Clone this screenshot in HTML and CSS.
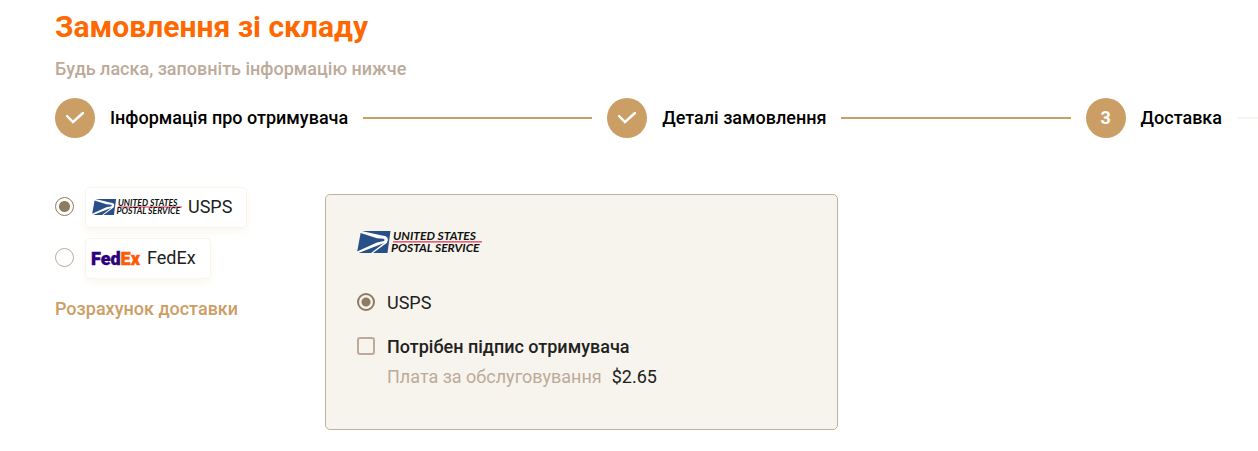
FILE: index.html
```html
<!DOCTYPE html>
<html lang="uk">
<head>
<meta charset="utf-8">
<meta name="viewport" content="width=device-width, initial-scale=1">
<title>Замовлення зі складу</title>
<link rel="stylesheet" href="styles.css">
</head>
<body>
<main class="page">
  <header class="heading">
    <h1 class="title">Замовлення зі складу</h1>
    <p class="subtitle">Будь ласка, заповніть інформацію нижче</p>
  </header>

  <ol class="steps">
    <li class="step">
      <span class="step-mark"><svg class="check" viewBox="0 0 20 20"><path d="M2 8 8 14 18 5"/></svg></span>
      <span class="step-name">Інформація про отримувача</span>
      <span class="step-line"></span>
    </li>
    <li class="step">
      <span class="step-mark"><svg class="check" viewBox="0 0 20 20"><path d="M2 8 8 14 18 5"/></svg></span>
      <span class="step-name">Деталі замовлення</span>
      <span class="step-line"></span>
    </li>
    <li class="step step-current" aria-current="step">
      <span class="step-mark">3</span>
      <span class="step-name">Доставка</span>
      <span class="step-line"></span>
    </li>
  </ol>

  <div class="content">
    <div class="carriers">
      <label class="carrier">
        <input class="radio radio-large" type="radio" name="carrier" checked>
        <span class="carrier-card">
          <svg class="usps-logo carrier-usps" viewBox="0 0 125 22" role="img" aria-label="United States Postal Service">
            <path fill="#fff" d="M4 0H33.500L30.500 22H0Z"/>
            <path fill="#285088" d="M4.600 0H33.500L30.500 22H16L30 11.800Q31.500 9.500 30.600 7 29 4.600 25 4.600Z"/>
            <path fill="#285088" d="M3.600 2 20 7.200 26.500 7.800Q28.500 8.800 27 10L20 11.500 .2 20.500Z"/>
            <path fill="#285088" d="M1.500 22 27 12 14 22Z"/>
            <path fill="#e0304e" d="M36.200 10.300H125L124.700 11.600H36Z"/>
            <text class="usps-text" x="36" y="9">UNITED STATES</text>
            <text class="usps-text" x="34" y="21">POSTAL SERVICE</text>
          </svg>
          USPS
        </span>
      </label>
      <label class="carrier">
        <input class="radio radio-large" type="radio" name="carrier">
        <span class="carrier-card">
          <svg class="carrier-fedex" viewBox="0 0 49 16" role="img" aria-label="FedEx"><text class="fedex-text" x="-1" y="15"><tspan class="fed">Fed</tspan><tspan class="ex">Ex</tspan></text></svg>
          FedEx
        </span>
      </label>
      <a class="calc" href="#">Розрахунок доставки</a>
    </div>

    <section class="panel">
      <svg class="usps-logo panel-logo" viewBox="0 0 125 22" role="img" aria-label="United States Postal Service">
        <path fill="#fff" d="M4 0H33.500L30.500 22H0Z"/>
        <path fill="#285088" d="M4.600 0H33.500L30.500 22H16L30 11.800Q31.500 9.500 30.600 7 29 4.600 25 4.600Z"/>
        <path fill="#285088" d="M3.600 2 20 7.200 26.500 7.800Q28.500 8.800 27 10L20 11.500 .2 20.500Z"/>
        <path fill="#285088" d="M1.500 22 27 12 14 22Z"/>
        <path fill="#e0304e" d="M36.200 10.300H125L124.700 11.600H36Z"/>
        <text class="usps-text" x="36" y="9">UNITED STATES</text>
        <text class="usps-text" x="34" y="21">POSTAL SERVICE</text>
      </svg>
      <label class="choice">
        <input class="radio radio-bold" type="radio" name="service" checked>
        <span>USPS</span>
      </label>
      <label class="choice choice-strong">
        <input class="checkbox" type="checkbox">
        <span>Потрібен підпис отримувача</span>
      </label>
      <p class="fee"><span class="fee-name">Плата за обслуговування</span><span>$2.65</span></p>
    </section>
  </div>
</main>
</body>
</html>
```

FILE: styles.css
```css
* { box-sizing: border-box; }

body {
  margin: 0;
  background: #fff;
  color: #212121;
  font: 400 18px/24px Roboto, "Noto Sans", sans-serif;
}

.page { padding: 8px 0 20px 55px; }

.title {
  margin: 0;
  color: #ff6700;
  font-size: 30px;
  line-height: 38px;
  font-weight: 700;
}

.subtitle {
  margin: 11px 0 17px;
  color: #bcab9b;
  font-weight: 500;
}

.steps {
  display: flex;
  gap: 15px;
  margin: 0;
  padding: 0;
  list-style: none;
  overflow: hidden;
}

.step {
  display: flex;
  flex: 1 0 auto;
  align-items: center;
  gap: 15px;
}

.step-current { flex-grow: 0; }

.step-mark {
  display: flex;
  align-items: center;
  justify-content: center;
  width: 40px;
  height: 40px;
  border-radius: 50%;
  background: #cb9e65;
  color: #fff;
  font-weight: 700;
}

.check {
  width: 20px;
  height: 20px;
  fill: none;
  stroke: #fff;
  stroke-width: 2.4;
  stroke-linecap: round;
}

.step-name {
  color: #000;
  font-weight: 500;
  white-space: nowrap;
}

.step-line {
  flex: 1 0 21px;
  height: 2px;
  background: #cb9e65;
}

.step-current .step-line { background: #f8f4ef; }

.content {
  display: grid;
  grid-template-columns: 270px minmax(0, 513px);
  align-items: start;
  padding: 49px 20px 0 0;
}

.carriers {
  display: flex;
  flex-direction: column;
  align-items: flex-start;
  gap: 10px;
}

.carrier {
  display: flex;
  align-items: center;
  gap: 11px;
}

.carrier-card {
  display: flex;
  align-items: center;
  gap: 6px;
  height: 41px;
  padding: 0 14px 2px 6px;
  border: 1px solid #f8f5ed;
  border-radius: 5px;
  background: #fff;
  box-shadow: 0 4px 8px #faf7ef;
}

.usps-logo { overflow: visible; }

.usps-text {
  fill: #111;
  font: italic 700 12px Lato, sans-serif;
}

.carrier-usps {
  width: 90px;
  height: 16px;
}

.carrier-fedex {
  width: 49px;
  height: 16px;
  overflow: visible;
}

.fedex-text {
  font: 900 18px Roboto, sans-serif;
  stroke-width: 0.4;
}

.fed {
  fill: #2b007c;
  stroke: #2b007c;
}

.ex {
  fill: #ff5a00;
  stroke: #ff5a00;
}

.calc {
  margin-top: 8px;
  color: #cb9e65;
  font-weight: 500;
  text-decoration: none;
}

.radio {
  appearance: none;
  flex: none;
  margin: 0;
  border: 1px solid #8f7b62;
  border-radius: 50%;
}

.radio-large {
  width: 19px;
  height: 19px;
  margin-bottom: 2px;
}

.radio-large:not(:checked) { border-color: #bcab9b; }

.radio-large:checked { background: radial-gradient(circle, #8f7b62 5px, #fff 6px); }

.radio-bold {
  width: 18px;
  height: 18px;
  margin-bottom: 2px;
  border-width: 2px;
}

.radio-bold:checked { background: radial-gradient(circle, #8f7b62 4px, transparent 5px); }

.panel {
  display: flex;
  flex-direction: column;
  margin-top: 7px;
  padding: 36px 31px 40px;
  border: 1px solid #bcb2a1;
  border-radius: 5px;
  background: #f7f4ed;
}

.panel-logo {
  width: 125px;
  height: 22px;
  margin-bottom: 38px;
}

.choice {
  display: flex;
  align-items: center;
  gap: 12px;
}

.choice-strong {
  margin: 20px 0 6px;
  font-weight: 500;
}

.checkbox {
  appearance: none;
  flex: none;
  width: 18px;
  height: 18px;
  margin: 0 0 2px;
  border: 2px solid #bcab9b;
  border-radius: 3px;
}

.fee {
  display: flex;
  gap: 10px;
  margin: 0 0 0 30px;
}

.fee-name { color: #bcab9b; }
```
